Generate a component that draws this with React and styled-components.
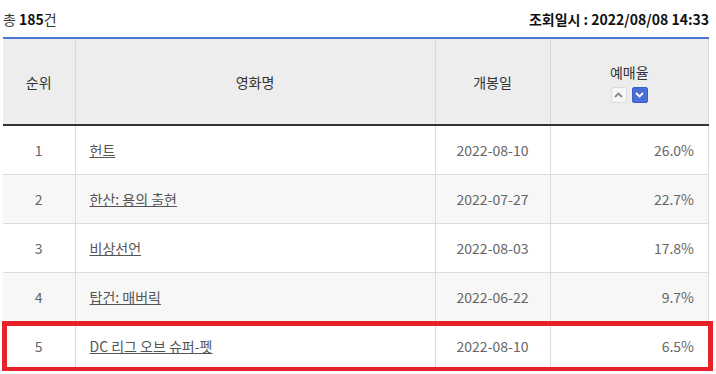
import React from 'react';
import styled, { createGlobalStyle } from 'styled-components';

const Global = createGlobalStyle`
	body {
		margin: 0;
		background: #fff;
		font-family: "Noto Sans CJK KR", "Noto Sans", sans-serif;
	}
`;

const Page = styled.div`
	padding: 0 7px 0 3px;
`;

const TopBar = styled.div`
	display: flex;
	justify-content: space-between;
	align-items: center;
	height: 37px;
	font-size: 14px;
	color: #333;
	b { color: #111; }
	.stamp { font-weight: bold; color: #111; }
`;

const TableWrap = styled.div`
	position: relative;
`;

const Table = styled.table`
	width: 100%;
	border-collapse: collapse;
	table-layout: fixed;
	border-top: 2px solid #4a76d6;
	font-size: 14px;
`;

const Th = styled.th`
	height: 85px;
	padding: 0;
	background: #ededed;
	color: #333;
	font-weight: normal;
	border-left: 1px solid #d8d8d8;
	border-bottom: 2px solid #333;
	&:first-child { border-left: none; }
	&:last-child { border-right: 1px solid #d8d8d8; }
`;

const Row = styled.tr`
	background: ${p => (p.$alt ? '#f7f7f7' : '#fff')};
`;

const Td = styled.td`
	height: 48px;
	padding: 0 14px;
	color: #666;
	text-align: ${p => p.$align || 'center'};
	border-left: 1px solid #dcdcdc;
	border-bottom: 1px solid #dcdcdc;
	&:first-child { border-left: none; }
	&:last-child { border-right: 1px solid #dcdcdc; }
`;

const TitleLink = styled.a`
	color: #555;
	text-decoration: underline;
	cursor: pointer;
`;

const SortLabel = styled.div`
	margin-top: 2px;
`;

const SortBox = styled.div`
	display: flex;
	justify-content: center;
	gap: 5px;
	margin-top: 5px;
`;

const SortBtn = styled.span`
	width: 16px;
	height: 16px;
	box-sizing: border-box;
	display: flex;
	align-items: center;
	justify-content: center;
	border-radius: 2px;
	border: 1px solid ${p => (p.$on ? '#3d5fc4' : '#dcdcdc')};
	background: ${p => (p.$on ? '#4a6fd6' : '#f6f6f6')};
`;

const Highlight = styled.div`
	position: absolute;
	left: -1px;
	right: -4px;
	bottom: -1px;
	height: 51px;
	border: 5px solid #e8202a;
	box-sizing: border-box;
	pointer-events: none;
`;

const movies = [
	{ rank: 1, title: '헌트', date: '2022-08-10', rate: '26.0%' },
	{ rank: 2, title: '한산: 용의 출현', date: '2022-07-27', rate: '22.7%' },
	{ rank: 3, title: '비상선언', date: '2022-08-03', rate: '17.8%' },
	{ rank: 4, title: '탑건: 매버릭', date: '2022-06-22', rate: '9.7%' },
	{ rank: 5, title: 'DC 리그 오브 슈퍼-펫', date: '2022-08-10', rate: '6.5%' },
];

const Chevron = ({ up, color }) => (
	<svg width="9" height="6" viewBox="0 0 9 6">
		<path d={up ? 'M1 5 L4.5 1.5 L8 5' : 'M1 1 L4.5 4.5 L8 1'} fill="none" stroke={color} strokeWidth="1.8" />
	</svg>
);

const App = () => (
	<Page>
		<Global />
		<TopBar>
			<span>총 <b>185</b>건</span>
			<span className="stamp">조회일시 : 2022/08/08 14:33</span>
		</TopBar>
		<TableWrap>
			<Table>
				<colgroup>
					<col style={{ width: '72px' }} />
					<col style={{ width: '360px' }} />
					<col style={{ width: '115px' }} />
					<col />
				</colgroup>
				<thead>
					<tr>
						<Th>순위</Th>
						<Th>영화명</Th>
						<Th>개봉일</Th>
						<Th>
							<SortLabel>예매율</SortLabel>
							<SortBox>
								<SortBtn><Chevron up color="#888" /></SortBtn>
								<SortBtn $on><Chevron color="#fff" /></SortBtn>
							</SortBox>
						</Th>
					</tr>
				</thead>
				<tbody>
					{movies.map((m, i) => (
						<Row key={m.rank} $alt={i % 2 === 1}>
							<Td>{m.rank}</Td>
							<Td $align="left"><TitleLink>{m.title}</TitleLink></Td>
							<Td>{m.date}</Td>
							<Td $align="right">{m.rate}</Td>
						</Row>
					))}
				</tbody>
			</Table>
			<Highlight />
		</TableWrap>
	</Page>
);

export default App;
